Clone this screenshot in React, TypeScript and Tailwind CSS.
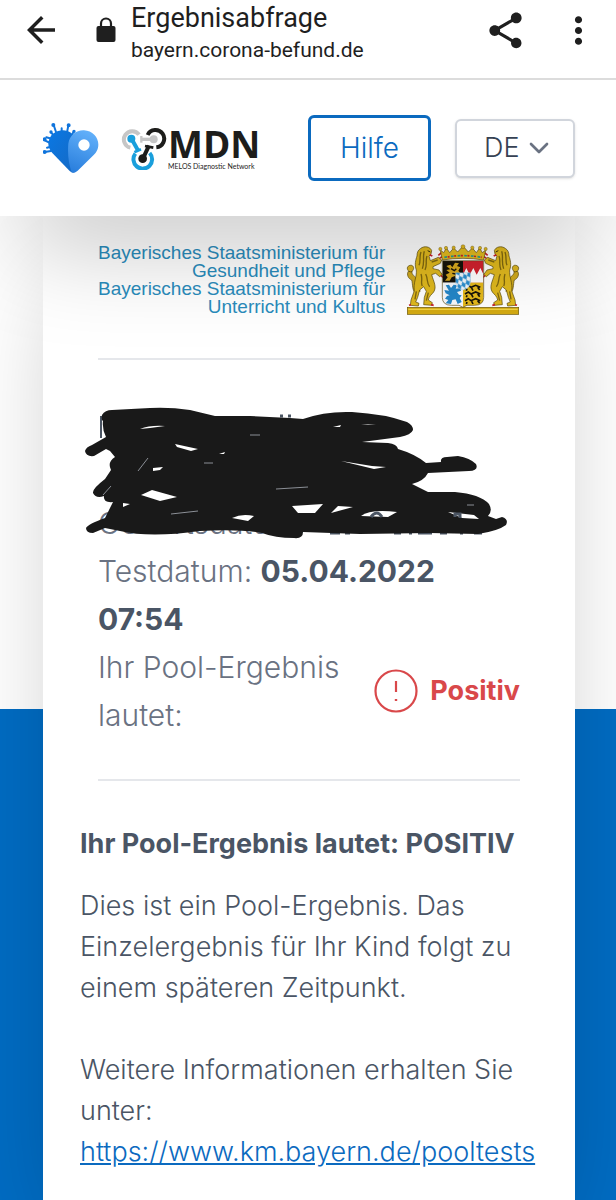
import { useState } from "react";
import { ChevronDown } from "lucide-react";
import { MdArrowBack, MdMoreVert, MdShare } from "react-icons/md";

function HeartLogo() {
  return (
    <svg className="h-[50px] w-[56px]" viewBox="0 0 168 150" aria-hidden="true">
      <defs>
        <linearGradient id="heartLeft" x1="0" y1="0" x2="1" y2="1">
          <stop offset="0" stopColor="#0a78e4" />
          <stop offset="1" stopColor="#1569c4" />
        </linearGradient>
        <linearGradient id="heartRight" x1="0.6" y1="0" x2="0.3" y2="1">
          <stop offset="0" stopColor="#62b0fa" />
          <stop offset="1" stopColor="#2a7fdd" />
        </linearGradient>
      </defs>
      <g stroke="#0f74dc" strokeWidth="6" fill="#0f74dc" strokeLinecap="round">
        <path d="M42 36 32 6M56 32 56 16M71 34 76 7M84 40 92 26M28 48 10 43M22 60 5 52M20 72 12 74M24 84 5 87M34 40 24 28" />
        <circle cx="31" cy="6" r="3" />
        <circle cx="77" cy="7" r="3" />
        <circle cx="5" cy="49" r="3" />
        <circle cx="5" cy="87" r="3" />
        <circle cx="24" cy="27" r="2" />
        <circle cx="93" cy="25" r="2" />
      </g>
      <path
        d="M16 62C18 34 40 22 60 22C78 23 88 32 93 40L96 148Q88 152 80 144L28 90Q16 76 16 62Z"
        fill="url(#heartLeft)"
      />
      <path
        d="M76 62C80 36 100 21 123 22C148 23 166 43 166 64C166 80 160 88 152 96L104 143Q95 151 86 148Q72 108 76 62Z"
        fill="url(#heartRight)"
      />
      <circle cx="123" cy="66" r="17" fill="#fff" />
    </svg>
  );
}

function MdnMark() {
  return (
    <svg className="h-[43px] w-[46px]" viewBox="0 0 138 129" aria-hidden="true">
      <g fill="none" strokeWidth="12">
        <path d="M28 62A25 25 0 1 1 54 23" stroke="#c6c6c6" />
        <path d="M80 24A26 26 0 1 1 106 61" stroke="#1d1d1b" />
        <path d="M86 78A28 28 0 1 1 43 80" stroke="#1a9fdc" />
        <path d="M62 37H98" stroke="#c6c6c6" strokeWidth="10" />
        <path d="M32 36 52 72" stroke="#1a9fdc" />
        <path d="M84 56 67 92" stroke="#1d1d1b" />
        <path d="M72 57 97 62" stroke="#1d1d1b" strokeWidth="8" />
        <path d="M40 76 60 67" stroke="#1a9fdc" strokeWidth="8" />
        <path d="M61 27V47" stroke="#c6c6c6" strokeWidth="7" />
      </g>
      <circle cx="31" cy="35" r="12" fill="#1a9fdc" />
      <circle cx="98" cy="37" r="12" fill="#c6c6c6" />
      <circle cx="65" cy="95" r="13" fill="#1d1d1b" />
    </svg>
  );
}

function Lion() {
  return (
    <g strokeLinejoin="round">
      <path
        d="M76 180C62 170 66 150 62 138C52 134 46 122 52 112L64 110C60 120 68 124 74 130C84 146 78 160 88 172"
        fill="#d0a91c"
        stroke="#54450a"
        strokeWidth="2"
      />
      <path
        d="M54 112C44 104 50 92 62 94C72 98 68 110 60 114Z"
        fill="#dcb520"
        stroke="#54450a"
        strokeWidth="2"
      />
      <path
        d="M88 44C100 34 118 38 122 50L120 60L114 66L118 80L142 70L152 78L148 88L126 98L126 104L144 108L154 122L146 128L134 118L122 122C128 144 138 158 128 174C122 182 114 186 112 198L124 206L122 214L98 212L100 190L106 172L98 158L86 168L80 190L74 204L84 208L82 216L58 214L60 198L70 170C66 148 78 128 76 108C70 92 74 78 78 66C78 54 82 48 88 44Z"
        fill="#e0b91e"
        stroke="#54450a"
        strokeWidth="2"
      />
      <path
        d="M90 54C84 70 90 80 84 94M100 52C94 68 102 84 94 104M108 66C102 80 110 90 102 108M90 120C96 136 88 146 94 156M104 120C112 136 106 148 116 158M76 172 72 196M112 176 106 200M122 84 140 78"
        fill="none"
        stroke="#80680f"
        strokeWidth="4"
      />
      <path d="M110 50 118 54" stroke="#3b3008" strokeWidth="3" />
      <path
        d="M116 62 124 66M142 64 154 54M146 72 154 68M150 124 156 130M60 212 54 214M120 212 128 214"
        stroke="#c8202a"
        strokeWidth="5"
      />
    </g>
  );
}

function CoatOfArms() {
  return (
    <svg
      className="h-[72px] w-[114px] shrink-0"
      viewBox="45 30 342 216"
      role="img"
      aria-label="Wappen des Freistaates Bayern"
    >
      <defs>
        <pattern
          id="rauten"
          width="14"
          height="20"
          patternUnits="userSpaceOnUse"
          patternTransform="rotate(-25)"
        >
          <rect width="14" height="20" fill="#f4f8fc" />
          <path d="M7 0 14 10 7 20 0 10Z" fill="#2b8fd0" />
        </pattern>
        <clipPath id="shield">
          <path d="M154 80H278V190Q278 214 250 214H228L216 220L204 214H182Q154 214 154 190Z" />
        </clipPath>
      </defs>
      <rect x="49" y="220" width="334" height="21" fill="#d4aa12" stroke="#6d5708" strokeWidth="2" />
      <path d="M52 226H380" stroke="#f0d448" strokeWidth="4" />
      <Lion />
      <g transform="translate(432 0) scale(-1 1)">
        <Lion />
      </g>
      <g clipPath="url(#shield)">
        <rect x="154" y="80" width="62" height="66" fill="#17130a" />
        <rect x="216" y="80" width="62" height="66" fill="#d2222e" />
        <path d="M216 146V122L226 102L236 122L247 102L257 122L268 102L278 122V146Z" fill="#fff" />
        <rect x="154" y="146" width="62" height="76" fill="#f7f9fb" />
        <rect x="216" y="146" width="62" height="76" fill="#e5b91b" />
        <path
          d="M166 96 178 92 184 100 192 86 204 88 198 96 208 100 202 110 210 120 204 130 210 138H196L192 126 182 130 176 140H162L170 130 164 122 176 116 166 108 178 106Z"
          fill="#d8a91e"
        />
        <path
          d="M180 104 190 110 196 104M184 118 194 120"
          fill="none"
          stroke="#17130a"
          strokeWidth="4"
        />
        <path
          d="M164 154 174 152 180 162 188 152 198 154 194 164 208 162 210 170 198 174 204 182 212 184 206 192 212 204 200 210 194 196 184 198 180 210 164 208 172 198 162 194 168 186 176 184 164 178 160 168 174 170Z"
          fill="#2487c9"
        />
        <g fill="none" stroke="#17130a" strokeWidth="5">
          <path d="M222 160 232 154 240 160 254 154 268 160M228 164 226 170M242 162 246 170M260 160 266 168" />
          <path d="M222 180 232 174 240 180 254 174 268 180M228 184 226 190M242 182 246 190M260 180 266 188" />
          <path d="M222 200 232 194 240 200 254 194 268 200M228 204 226 210M242 202 246 210M260 200 266 208" />
        </g>
      </g>
      <path
        d="M154 80H278V190Q278 214 250 214H228L216 220L204 214H182Q154 214 154 190Z"
        fill="none"
        stroke="#5b4a12"
        strokeWidth="2"
      />
      <path
        d="M194 116H238V146Q238 162 216 168Q194 162 194 146Z"
        fill="url(#rauten)"
        stroke="#8bb9da"
        strokeWidth="1"
      />
      <path
        d="M154 78 148 48 158 56 166 42 176 56 188 42 200 54 216 36 232 54 244 42 256 56 266 42 274 56 284 48 278 78Q216 68 154 78Z"
        fill="#e3bb20"
        stroke="#5b4a12"
        strokeWidth="2"
      />
      <g fill="#e3bb20" stroke="#5b4a12">
        <circle cx="148" cy="45" r="5" />
        <circle cx="165" cy="42" r="5" />
        <circle cx="188" cy="41" r="5" />
        <circle cx="216" cy="38" r="6" />
        <circle cx="244" cy="41" r="5" />
        <circle cx="267" cy="42" r="5" />
        <circle cx="284" cy="45" r="5" />
      </g>
      <path d="M160 70Q216 60 272 70" fill="none" stroke="#2a9a8c" strokeWidth="5" strokeDasharray="8 12" />
      <path d="M170 69Q216 60 272 70" fill="none" stroke="#c8202a" strokeWidth="5" strokeDasharray="6 14" />
    </svg>
  );
}

function Scribble() {
  return (
    <svg
      className="absolute -left-[14px] top-[3px] h-[135px] w-[424px]"
      viewBox="84 405 424 135"
      aria-hidden="true"
    >
      <path d="M101 415V437" stroke="#4b5563" strokeWidth="2" />
      <path d="M280 415H283M288 415H291" stroke="#4b5563" strokeWidth="3" />
      <path
        d="M330 532H340M345 532H350M394 532H401M409 532H412M418 532H432M440 532H447M460 532H463M474 532H482M484 510V524"
        stroke="#4b5563"
        strokeWidth="3"
      />
      <path
        d="M102 414Q105 409 112 409L150 407Q170 406 190 409L215 415L250 415L290 417L303 418Q325 410 352 411Q385 413 407 421Q413 424 413 429Q411 434 400 436L362 441L388 442Q397 443 398 448Q415 453 426 462L441 461Q440 456 447 456L458 455Q470 457 476 463Q479 470 469 470L428 472Q424 480 412 483L428 491L455 491Q480 493 489 503Q493 510 488 515L496 518L502 516Q509 518 506 524Q498 530 478 533L430 532L360 533L303 531Q303 538 294 537Q275 537 262 532Q240 528 200 530Q150 537 120 530L105 527L93 532Q86 532 86 527Q88 523 105 517L113 501Q103 502 104 495Q96 498 93 492Q92 488 105 478L111 469Q107 461 115 456L110 450L106 448L94 455Q86 456 85 450Q86 446 92 444L106 436Q102 428 103 420Q101 419 102 414Z"
        fill="#191919"
      />
      <g fill="#fff">
        <path d="M175 443 198 448 191 450 177 446Z" />
        <path d="M141 494 152 489 177 496 160 500Z" />
        <path d="M153 467 163 466 160 469 153 470Z" />
        <path d="M341 460 372 465 386 466 374 468Z" />
        <path d="M292 505 323 503 315 512 298 512Z" />
        <path d="M338 505 353 506 331 512Z" />
        <path d="M361 515Q370 508 397 511L388 516Z" />
        <path d="M232 517Q242 512 254 515L248 520Z" />
        <path d="M448 511 474 514 479 518 462 517Z" />
        <path d="M123 502 130 503 123 506Z" />
        <path d="M140 428Q150 424 165 425L150 427Z" />
        <path d="M333 426 341 424 340 426Z" />
        <path d="M361 423 376 424 368 424Z" />
        <path d="M219 453 225 451 224 453Z" />
      </g>
      <g fill="none" stroke="#8b8f96">
        <path d="M138 470 148 457M171 513 198 510M276 488 308 486M103 494 111 485M250 434H260M467 504H474M204 462H213" />
      </g>
      <path d="M371 516Q377 508 382 516M455 516V513H460V517" fill="none" stroke="#4b5563" strokeWidth="3" />
    </svg>
  );
}

function BrowserBar() {
  return (
    <div className="relative z-20 flex h-20 items-start border-b-2 border-[#dcdcdc] bg-white px-5 text-[#1f1f1f]">
      <button type="button" aria-label="Zurück" className="mt-[9px]">
        <MdArrowBack size={42} />
      </button>
      <svg className="ml-[34px] mt-[17px] h-[26px] w-5" viewBox="0 0 20 26" aria-hidden="true">
        <rect x="0.5" y="9" width="19" height="16" rx="2" fill="currentColor" />
        <path d="M5 10V6.500a5 5 0 0 1 10 0V10" fill="none" stroke="currentColor" strokeWidth="2.2" />
      </svg>
      <div className="ml-[15px] flex-1 font-['Roboto',sans-serif]">
        <p className="text-[27px] leading-9">Ergebnisabfrage</p>
        <p className="text-[21px] leading-7">bayern.corona-befund.de</p>
      </div>
      <button type="button" aria-label="Teilen" className="mt-[9px]">
        <MdShare size={43} />
      </button>
      <button type="button" aria-label="Mehr" className="-mr-1 ml-[30px] mt-[9px]">
        <MdMoreVert size={43} />
      </button>
    </div>
  );
}

function Header() {
  const [language, setLanguage] = useState("DE");

  return (
    <header className="relative z-10 flex h-[136px] items-center bg-white pl-[43px] pr-[41px] shadow-[0_50px_100px_-24px_rgba(0,0,0,0.25)]">
      <HeartLogo />
      <div className="ml-[22px] flex items-center">
        <MdnMark />
        <div className="ml-px font-['Open_Sans',sans-serif] text-[#1d1d1b]">
          <p className="text-[37px] font-bold leading-9">MDN</p>
          <p className="whitespace-nowrap font-['Lato',sans-serif] text-[7px] leading-2">
            MELOS Diagnostic Network
          </p>
        </div>
      </div>
      <button
        type="button"
        className="ml-auto h-[66px] rounded-md border-[3px] border-[#0b6abf] px-[29px] text-[28px] font-light text-[#0b6abf]"
      >
        Hilfe
      </button>
      <div className="relative ml-6">
        <select
          aria-label="Sprache"
          value={language}
          onChange={(e) => setLanguage(e.target.value)}
          className="h-[59px] w-[120px] appearance-none rounded-md border-2 border-gray-300 bg-white pl-[27px] text-[27px] font-light text-gray-700 shadow-sm"
        >
          <option>DE</option>
          <option>EN</option>
        </select>
        <ChevronDown
          size={32}
          className="pointer-events-none absolute right-5 top-[13px] text-gray-500"
        />
      </div>
    </header>
  );
}

export default function App() {
  return (
    <div className="flex min-h-screen flex-col bg-white font-['Inter',sans-serif] text-gray-600">
      <BrowserBar />
      <Header />

      <main className="flex flex-1 flex-col bg-[linear-gradient(to_bottom,#ffffff_493px,#006cc3_493px)] pl-[43px] pr-[41px]">
        <div className="flex-1 bg-white px-[37px] pb-5 pt-7 shadow-[0_50px_100px_-24px_rgba(0,0,0,0.25)]">
          <section className="mx-[18px]">
            {/* ministries */}
            <div className="flex items-start justify-between border-b-2 border-gray-200 pb-[42px]">
              <p className="text-right font-['Liberation_Sans',sans-serif] text-[19px] leading-[18px] text-[#2a8cbc]">
                Bayerisches Staatsministerium für
                <br />
                Gesundheit und Pflege
                <br />
                Bayerisches Staatsministerium für
                <br />
                Unterricht und Kultus
              </p>
              <CoatOfArms />
            </div>

            {/* result */}
            <div className="border-b-2 border-gray-200 pb-10 pt-[43px] text-[30px] font-light leading-[48px] text-gray-500">
              <div className="relative h-36 pt-24">
                <p>Geburtsdatum:</p>
                <Scribble />
              </div>
              <p>
                Testdatum: <strong className="font-bold text-gray-600">05.04.2022 07:54</strong>
              </p>
              <div className="flex items-center justify-between">
                <p>
                  Ihr Pool-Ergebnis
                  <br />
                  lautet:
                </p>
                <div className="flex items-center gap-3 text-[#d9484a]">
                  <svg className="size-11" viewBox="0 0 44 44" fill="none" stroke="currentColor" aria-hidden="true">
                    <circle cx="22" cy="22" r="20.5" strokeWidth="2.2" />
                    <path d="M22 12V23" strokeWidth="2.2" />
                    <path d="M22 30V32" strokeWidth="2.4" />
                  </svg>
                  <span className="text-[27px] font-bold">Positiv</span>
                </div>
              </div>
            </div>
          </section>

          <section className="pt-[42px] text-[27px] font-light leading-[41px]">
            <h1 className="font-bold">Ihr Pool-Ergebnis lautet: POSITIV</h1>
            <p className="mt-[21px]">
              Dies ist ein Pool-Ergebnis. Das
              <br />
              Einzelergebnis für Ihr Kind folgt zu
              <br />
              einem späteren Zeitpunkt.
            </p>
            <p className="mt-[41px]">
              Weitere Informationen erhalten Sie
              <br />
              unter:
              <br />
              <a href="https://www.km.bayern.de/pooltests" className="text-[#0b6abf] underline">
                https://www.km.bayern.de/pooltests
              </a>
            </p>
          </section>
        </div>
      </main>
    </div>
  );
}
